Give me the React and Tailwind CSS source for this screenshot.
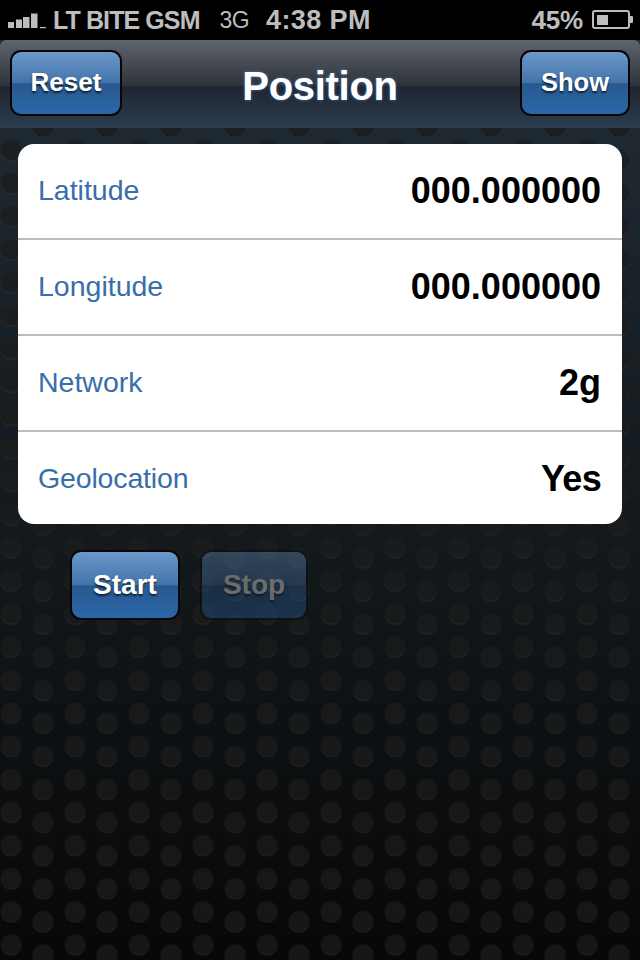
import React from "react";

const btn =
  "flex items-center justify-center border-2 border-[#060606] rounded-[11px] text-white font-bold bg-[linear-gradient(180deg,#6c98ca_0%,#4273a9_50%,#28598f_51%,#2b66a8_100%)] [text-shadow:0_2px_2px_rgba(0,0,0,0.65)]";

function Row({ label, value, last }) {
  return (
    <div
      className={
        last
          ? "flex items-center justify-between h-[92px] pl-5 pr-[21px]"
          : "flex items-center justify-between h-[96px] pl-5 pr-[21px] pb-[2px] border-b-2 border-[#bcbcbc]"
      }
    >
      <span className={last ? "text-[28.5px] text-[#386ea9] tracking-[-0.15px]" : "text-[28.5px] text-[#386ea9]"}>{label}</span>
      <span className={last ? "text-[36px] font-bold text-black relative top-px tracking-[-0.7px]" : "text-[36px] font-bold text-black relative top-px"}>{value}</span>
    </div>
  );
}

function Signal() {
  return (
    <svg width="40" height="20" viewBox="0 0 40 20" className="ml-2 mr-[5px] shrink-0" fill="#bdbdbd">
      <rect x="0" y="12" width="6" height="6" />
      <rect x="8" y="9.5" width="6" height="8.5" />
      <rect x="15" y="7" width="6.5" height="11" />
      <rect x="23" y="3.5" width="6.5" height="14.5" />
      <rect x="32" y="17" width="6" height="1.2" />
    </svg>
  );
}

function Battery() {
  return (
    <svg width="42" height="20" viewBox="0 0 42 20" className="ml-[9px] mr-[6px] shrink-0" fill="none">
      <rect x="1" y="1" width="36" height="17" rx="2" stroke="#bdbdbd" strokeWidth="2" />
      <rect x="5" y="5" width="11" height="10" fill="#bdbdbd" />
      <path d="M38 6h2a1 1 0 0 1 1 1v5a1 1 0 0 1-1 1h-2z" fill="#bdbdbd" />
    </svg>
  );
}

export default function App() {
  return (
    <div className="relative w-[640px] h-[960px] overflow-hidden bg-[linear-gradient(180deg,#202c38_0%,#1d2831_15%,#12171a_60%,#070708_100%)] font-['Liberation_Sans',Arial,sans-serif]">
      <svg className="absolute inset-0" width="640" height="960">
        <defs>
          <linearGradient id="ring" x1="0" y1="0" x2="0" y2="1">
            <stop offset="0.5" stopColor="#fff" stopOpacity="0" />
            <stop offset="1" stopColor="#fff" stopOpacity="0.06" />
          </linearGradient>
          <pattern id="dots" width="64" height="33.1" patternUnits="userSpaceOnUse">
            <circle cx="11" cy="18" r="10.5" fill="#1c1c1c" fillOpacity="0.72" stroke="url(#ring)" strokeWidth="1" />
            <circle cx="43" cy="28" r="10.5" fill="#1c1c1c" fillOpacity="0.72" stroke="url(#ring)" strokeWidth="1" />
            <circle cx="43" cy="-5.1" r="10.5" fill="#1c1c1c" fillOpacity="0.72" stroke="url(#ring)" strokeWidth="1" />
          </pattern>
        </defs>
        <rect width="640" height="960" fill="url(#dots)" />
      </svg>

      <div className="relative flex flex-col">
        <div className="flex items-center h-10 bg-black text-[#bdbdbd] leading-none whitespace-nowrap">
          <Signal />
          <span className="font-bold text-[25px] tracking-[-0.9px]">LT BITE GSM</span>
          <span className="ml-5 tracking-[-0.6px] text-[23px]">3G</span>
          <span className="ml-[17px] font-bold text-[27px] tracking-[0.4px]">4:38 PM</span>
          <span className="ml-auto font-bold text-[26px] tracking-[-0.2px]">45%</span>
          <Battery />
        </div>

        <div className="flex items-start justify-between h-[88px] px-[10px] pt-[10px]">
          <div className="absolute left-0 right-0 top-10 h-[88px] rounded-t-[6px] bg-[linear-gradient(180deg,#5f646e_0%,#2e3238_52%,#1f2630_53%,#2c3b4e_100%)]" />
          <button className={`relative w-[112px] h-[66px] pb-px text-[26px] ${btn}`}>Reset</button>
          <h1 className="relative self-center mb-[6px] -ml-[2px] text-white font-bold text-[40px] tracking-[-0.3px] leading-none [text-shadow:0_0_3px_rgba(70,130,200,0.9)]">Position</h1>
          <button className={`relative w-[110px] h-[66px] pb-px text-[25.5px] ${btn}`}>Show</button>
        </div>

        <div className="mt-4 mx-[18px] bg-white rounded-2xl overflow-hidden">
          <Row label="Latitude" value="000.000000" />
          <Row label="Longitude" value="000.000000" />
          <Row label="Network" value="2g" />
          <Row label="Geolocation" value="Yes" last />
        </div>

        <div className="flex gap-5 mt-[26px] pl-[70px]">
          <button className={`w-[110px] h-[70px] text-[28px] ${btn}`}>Start</button>
          <button className={`w-[108px] h-[70px] text-[28px] opacity-[0.36] ${btn}`}>Stop</button>
        </div>
      </div>
    </div>
  );
}
